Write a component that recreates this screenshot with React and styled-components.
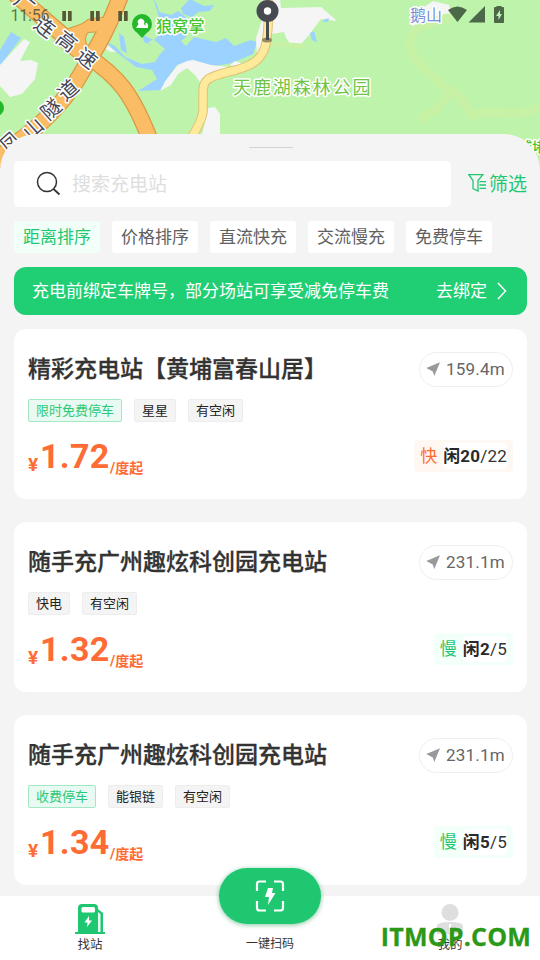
import React from 'react';
import styled, { createGlobalStyle, css } from 'styled-components';

const GlobalStyle = createGlobalStyle`
  * { box-sizing: border-box; }
  body {
    margin: 0;
    background: #f4f4f4;
    font-family: Roboto, "Noto Sans CJK SC", sans-serif;
    color: #333;
  }
`;

const Screen = styled.main`
  width: 540px;
  height: 960px;
  overflow: hidden;
  display: flex;
  flex-direction: column;
  background: #f4f4f4;
`;

const MapSvg = styled.svg`
  display: block;
  width: 540px;
  height: 174px;
  flex: none;
`;

const MapLabel = styled.text`
  font-family: "Noto Sans CJK SC", sans-serif;
  font-size: ${(p) => p.$size}px;
  letter-spacing: ${(p) => p.$spacing || 0}px;
  font-weight: ${(p) => p.$weight || 400};
  fill: ${(p) => p.$color};
  stroke: #fff;
  stroke-width: 3px;
  stroke-linejoin: round;
  paint-order: stroke;
`;

const ClockText = styled.text`
  font-family: Roboto, sans-serif;
  font-size: 16px;
  fill: #30402c;
  fill-opacity: 0.72;
`;

const Sheet = styled.section`
  position: relative;
  flex: 1;
  min-height: 0;
  margin-top: -40px;
  padding: 13px 13px 0 14px;
  border-radius: 36px 36px 0 0;
  background: #f4f4f4;
  display: flex;
  flex-direction: column;
  overflow: hidden;
`;

const Grip = styled.div`
  flex: none;
  align-self: center;
  width: 44px;
  height: 1px;
  background: #d2d4d4;
`;

const SearchRow = styled.div`
  flex: none;
  display: flex;
  align-items: center;
  justify-content: space-between;
  height: 46px;
  margin-top: 13px;
`;

const SearchBox = styled.div`
  display: flex;
  align-items: center;
  width: 437px;
  height: 46px;
  padding-left: 22px;
  gap: 10px;
  border-radius: 5px;
  background: #fff;
  color: #dedede;
  font-size: 19px;
  line-height: 47px;
`;

const FilterButton = styled.div`
  display: flex;
  align-items: center;
  gap: 3px;
  height: 44px;
  padding-bottom: 4px;
  color: #1fc771;
  font-size: 19px;
  white-space: nowrap;
`;

const Tabs = styled.div`
  flex: none;
  display: flex;
  gap: 12px;
  margin-top: 14px;
`;

const Tab = styled.div`
  width: 86px;
  height: 32px;
  border-radius: 3px;
  font-size: 17px;
  line-height: 33px;
  text-align: center;
  background: ${(p) => (p.$active ? '#f1fff8' : '#fff')};
  color: ${(p) => (p.$active ? '#1fc771' : '#606060')};
`;

const Banner = styled.div`
  flex: none;
  display: flex;
  align-items: center;
  justify-content: space-between;
  height: 48px;
  margin-top: 14px;
  padding: 0 20px 0 18px;
  border-radius: 12px;
  background: #20cf74;
  color: #fff;
  font-size: 17px;
  line-height: 48px;
`;

const BannerAction = styled.span`
  display: flex;
  align-items: center;
  gap: 10px;
`;

const StationList = styled.div`
  flex: none;
  display: flex;
  flex-direction: column;
  gap: 23px;
  margin-top: 14px;
`;

const Card = styled.article`
  height: 170px;
  padding: 23px 14px 0;
  border-radius: 12px;
  background: #fff;
  display: flex;
  flex-direction: column;
`;

const CardRow = styled.div`
  display: flex;
  justify-content: space-between;
  align-items: flex-start;
`;

const Title = styled.h2`
  margin: 0;
  padding-top: 1px;
  font-size: 23px;
  line-height: 34px;
  font-weight: 500;
  -webkit-text-stroke: 0.3px #333;
  white-space: nowrap;
`;

const Distance = styled.div`
  display: flex;
  align-items: center;
  justify-content: center;
  gap: 6px;
  width: 94px;
  height: 35px;
  padding: 0 1px 2px 0;
  border: 1px solid #efefef;
  border-radius: 18px;
  color: #666;
  font-size: 17px;
  letter-spacing: 0.2px;
`;

const Tags = styled.div`
  display: flex;
  gap: 12px;
  height: 23px;
  margin-top: 12px;
`;

const Tag = styled.span`
  height: 23px;
  padding: 0 7px;
  border: 1px solid #ededed;
  border-radius: 2px;
  background: #f4f4f4;
  color: #222;
  font-size: 13px;
  line-height: 22px;
  ${(p) =>
    p.$green &&
    css`
      border-color: #a3e8c5;
      background: #e8faf1;
      color: #2bc97a;
    `}
`;

const PriceRow = styled(CardRow)`
  margin-top: 17px;
`;

const Price = styled.div`
  display: flex;
  align-items: baseline;
  color: #ff6b35;
  font-weight: 700;
  line-height: 34px;
  height: 34px;
`;

const Currency = styled.span`
  position: relative;
  top: 3px;
  width: 12px;
  font-size: 19px;
`;

const Amount = styled.span`
  font-size: 34px;
  letter-spacing: 0.3px;
  width: 70px;
`;

const Unit = styled.span`
  position: relative;
  top: 5px;
  font-size: 14px;
  font-weight: 700;
`;

const Availability = styled.div`
  display: flex;
  align-items: center;
  height: 32px;
  margin-top: 1px;
  padding: 0 6px;
  gap: 6px;
  border-radius: 4px;
  background: ${(p) => (p.$fast ? '#fff7f1' : '#f3fff9')};
  color: ${(p) => (p.$fast ? '#ff6b2c' : '#1fc771')};
  font-size: 17px;
  line-height: 32px;
`;

const Slots = styled.span`
  height: 26px;
  line-height: 26px;
  border-radius: 4px;
  background: #fff;
  color: #333;
  letter-spacing: 0.2px;
`;

const Free = styled.b`
  font-weight: 700;
  color: #292929;
`;

const NavBar = styled.nav`
  position: relative;
  flex: none;
  display: grid;
  grid-template-columns: repeat(3, 180px);
  height: 64px;
  background: #fff;
`;

const NavItem = styled.div`
  display: flex;
  flex-direction: column;
  align-items: center;
  padding-top: 7px;
  color: #333;
  font-size: ${(p) => p.$size || 12.5}px;
  line-height: 18px;
`;

const NavText = styled.span`
  margin-top: ${(p) => p.$gap ?? 2}px;
`;

const ScanButton = styled.div`
  flex: none;
  display: flex;
  align-items: center;
  justify-content: center;
  width: 102px;
  height: 56px;
  margin: -35px 0 11px;
  border-radius: 28px;
  background: #1fc771;
  box-shadow: 0 1px 5px rgba(31, 150, 90, 0.55);
`;

const Watermark = styled.div`
  position: absolute;
  right: 9px;
  top: 23px;
  color: #2b9917;
  font-family: "Open Sans", sans-serif;
  font-size: 25px;
  letter-spacing: 0.2px;
  line-height: 34px;
  font-weight: 700;
  -webkit-text-stroke: 0.3px #2b9917;
`;

const stations = [
  { name: '精彩充电站【黄埔富春山居】', distance: '159.4m', tags: ['限时免费停车', '星星', '有空闲'], price: '1.72', kind: '快', free: 20, total: 22 },
  { name: '随手充广州趣炫科创园充电站', distance: '231.1m', tags: ['快电', '有空闲'], price: '1.32', kind: '慢', free: 2, total: 5 },
  { name: '随手充广州趣炫科创园充电站', distance: '231.1m', tags: ['收费停车', '能银链', '有空闲'], price: '1.34', kind: '慢', free: 5, total: 5 },
];

const highway = [
  'M8 -12 L86 55 C117 76 132 91 152 145',
  'M122 -8 Q111 22 98 45 L76 82 Q54 116 16 143 L-8 164',
];

const interchange = 'M60 31 Q83 26 88 20 Q99 17 111 18 L103 31 L88 32 Q82 37 88 49 L76 58 L55 42Z';

function MapView() {
  return (
    <MapSvg viewBox="0 0 540 174">
      <rect width="540" height="174" fill="#bdf3ab" />
      <path d="M0 50 L11 32 21 38 0 66Z" fill="#9bd2ff" />
      <path d="M0 65 L24 39 30 42 20 61 31 60 38 63 35 79 22 94 10 97 0 86Z" fill="#f5f5f5" />
      <path d="M153 -2 L157 5 159 12 171 15 178 11 187 18 185 27 187 36 181 41 186 46 194 37 216 42 226 38 234 46 251 40 257 42 253 54 232 63 210 67 193 60 177 65 164 83 161 90 138 91 157 79 152 70 136 67 115 51 106 42 115 46 125 57 142 64 155 62 160 54 165 49 153 39 148 43 153 46 144 42 142 35 154 40 160 34 159 17Z" fill="#9bd2ff" />
      <path d="M183 14 L181 8 190 -1 204 6 214 5 210 11 198 12 192 17Z" fill="#9bd2ff" />
      <path d="M121 50 L119 33 124 37 127 53Z" fill="#9bd2ff" />
      <path d="M105 43 L116 52 111 52 104 48Z" fill="#f5f5f5" />
      <path d="M160 91 L166 80 178 65 187 61 193 60 211 65 230 67 217 73 206 78 202 85 195 75 187 68 178 74 171 85Z" fill="#f5f5f5" />
      <path d="M230 65 L235 61 243 64 257 57 256 38 262 20 262 -2 280 -2 281 8 321 7 337 21 321 19 309 35 301 44 291 45 286 38 284 32 266 35 263 50 248 67 237 68Z" fill="#f5f5f5" />
      <path d="M323 20 L329 18 328 22 323 22Z M310 33 L314 31 317 42 312 40Z" fill="#9bd2ff" />
      <path d="M208 108 L215 107 220 114 220 135 202 135Z" fill="#f5f5f5" />
      <path d="M409 24 L424 7 433 1 449 5 451 13 418 28Z" fill="#f5f5f5" />
      <g fill="none" stroke="#c7f2a6" strokeLinecap="round" strokeLinejoin="round">
        <path d="M448 18 C425 23 408 27 410 48 C418 68 436 75 449 94 L437 108 422 119" strokeWidth="9" />
        <path d="M449 94 L454 89 473 116 C490 105 505 122 545 106" strokeWidth="9" />
        <path d="M273 44 L303 46" strokeWidth="5" />
      </g>
      <g fill="none" strokeLinecap="round" strokeLinejoin="round">
        <path d="M268 0 C270 50 265 62 236 70 C205 77 203 80 203 94 L203 112 Q201 123 191 138" stroke="#dfc174" strokeWidth="9.5" />
        <path d="M268 0 C270 50 265 62 236 70 C205 77 203 80 203 94 L203 112 Q201 123 191 138" stroke="#ffe99a" strokeWidth="7.5" />
        {highway.map((d) => (
          <path key={d} d={d} stroke="#d99843" strokeWidth="17" />
        ))}
        <path d={interchange} stroke="#d99843" strokeWidth="2" />
        {highway.map((d) => (
          <path key={d} d={d} stroke="#fbbc66" strokeWidth="14.5" />
        ))}
        <path d={interchange} fill="#fbbc66" />
      </g>
      <circle cx="142" cy="24" r="10" fill="#24b82b" />
      <path d="M134.500 30 L142 38 149.500 30Z" fill="#24b82b" />
      <path d="M136 28 L138.500 24 L137.500 22 Q138 19 141 18.500 Q144 19 144.500 22 L144 24 L145.500 26 Q145 22 147 23 Q149 25 148 28Z" fill="#fff" />
      <circle cx="-4" cy="108" r="8" fill="#24b82b" />
      <MapLabel x="156" y="31.500" $size={16} $spacing={0.3} $weight={500} $color="#47c52d">狼窝掌</MapLabel>
      <MapLabel x="233" y="93.500" $size={18} $spacing={1.9} $color="#70c443">天鹿湖森林公园</MapLabel>
      <MapLabel x="410" y="21" $size={16} $color="#7691d5">鹅山</MapLabel>
      <MapLabel x="518" y="152" $size={14} $weight={500} $color="#47c52d">埔堵</MapLabel>
      {[
        ['广', 25, 3, 38], ['连', 45, 27, 38], ['高', 67, 41, 38], ['速', 87, 58, 38],
        ['道', 68, 90, -42], ['隧', 51, 109, -42], ['山', 33, 128, -42], ['凤', 10, 142, -42],
      ].map(([char, x, y, angle]) => (
        <g key={char} transform={`translate(${x} ${y}) rotate(${angle})`}>
          <MapLabel x="-10" y="7.500" $size={20} $weight={400} $color="#414557">{char}</MapLabel>
        </g>
      ))}
      <ellipse cx="267" cy="40" rx="5" ry="2.5" fill="#958b63" />
      <path d="M267.500 20V40" stroke="#474a51" strokeWidth="3" />
      <circle cx="267.500" cy="11" r="11" fill="#474a51" />
      <circle cx="267.500" cy="11" r="3.700" fill="#fff" />
      <ClockText x="10.500" y="21" textLength="39">11:56</ClockText>
      <path d="M62.300 11h3.700v10h-3.700z M68 11h3.700v10h-3.700z M90.300 11h3.700v10h-3.700z M96 11h3.700v10h-3.700z M118.300 11h3.700v10h-3.700z M124 11h3.700v10h-3.700z" fill="#5a5638" />
      <g fill="#4b6848">
        <path d="M448 10 Q457.500 3 467 10 L457.500 22Z M485 6 V22.500 H468.500Z" />
        <path d="M494 8 Q494 7 495 7H496.500V6H501.500V7H503 Q504 7 504 8V22 Q504 23 503 23H495 Q494 23 494 22Z" />
      </g>
      <path d="M500 10 L496 16 h2.500 V20 L502 14h-2Z" fill="#c1efb2" />
    </MapSvg>
  );
}

const SearchIcon = () => (
  <svg width="26" height="26" viewBox="0 0 26 26" fill="none" stroke="#333" strokeWidth="1.500">
    <circle cx="11" cy="11" r="9.500" />
    <path d="M17.500 18L23.500 23.500" strokeWidth="1.800" />
  </svg>
);

const FilterIcon = () => (
  <svg width="18" height="20" viewBox="0 0 18 20" fill="none" stroke="#1fc771" strokeWidth="1.300">
    <path d="M.8 2.700H14.800L10 8.500V19L5 16.500V8.500L.8 2.700ZM11.500 9.600h6.500M11.500 13h6.500M11.500 16.400h6.500" />
  </svg>
);

const ArrowIcon = () => (
  <svg width="14" height="14" viewBox="0 0 14 14" fill="#999">
    <path d="M.3 6L14 .3L8.300 14L6.800 9.500Z" />
  </svg>
);

const PumpIcon = () => (
  <svg width="30" height="31" viewBox="0 0 30 31">
    <path d="M3 29V5Q3 1 7 1H19Q23 1 23 5V6L28 10V29H30V31H0V29Z" fill="#1fc771" />
    <rect x="6.500" y="4" width="13.500" height="5.500" rx="1.500" fill="#fff" />
    <path d="M23 9L25.500 11V29H23Z" fill="#e8faf1" />
    <path d="M14 13L9.500 19.500H12.500L12 24L17 17.500H14Z" fill="#fff" />
  </svg>
);

const ScanIcon = () => (
  <svg width="30" height="32" viewBox="0 0 30 32" fill="none">
    <path d="M2 11V4Q2 1.500 4.500 1.500H11M19 1.500H25.500Q28 1.500 28 4V11M28 21V28Q28 30.500 25.500 30.500H19M11 30.500H4.500Q2 30.500 2 28V21" stroke="#fff" strokeWidth="2.200" />
    <path d="M13 8H18L17 13H20.500L13 25L14 17H10Z" fill="#fff" />
  </svg>
);

const UserIcon = () => (
  <svg width="28" height="31" viewBox="0 0 28 31" fill="#dedede">
    <circle cx="14" cy="9.500" r="8.500" />
    <path d="M1 31V23Q1 19 14 19Q27 19 27 23V31Z" />
    <path d="M14 21V30" stroke="#fff" strokeWidth="2" />
  </svg>
);

const StationCard = ({ station }) => (
  <Card>
    <CardRow>
      <Title>{station.name}</Title>
      <Distance><ArrowIcon />{station.distance}</Distance>
    </CardRow>
    <Tags>
      {station.tags.map((tag) => (
        <Tag key={tag} $green={tag.endsWith('停车')}>{tag}</Tag>
      ))}
    </Tags>
    <PriceRow>
      <Price>
        <Currency>¥</Currency>
        <Amount>{station.price}</Amount>
        <Unit>/度起</Unit>
      </Price>
      <Availability $fast={station.kind === '快'}>
        {station.kind}
        <Slots><Free>闲{station.free}</Free>/{station.total}</Slots>
      </Availability>
    </PriceRow>
  </Card>
);

export default function App() {
  return (
    <Screen>
      <GlobalStyle />
      <MapView />
      <Sheet>
        <Grip />
        <SearchRow>
          <SearchBox><SearchIcon />搜索充电站</SearchBox>
          <FilterButton><FilterIcon />筛选</FilterButton>
        </SearchRow>
        <Tabs>
          {['距离排序', '价格排序', '直流快充', '交流慢充', '免费停车'].map((label, i) => (
            <Tab key={label} $active={i === 0}>{label}</Tab>
          ))}
        </Tabs>
        <Banner>
          <span>充电前绑定车牌号，部分场站可享受减免停车费</span>
          <BannerAction>
            去绑定
            <svg width="10" height="18" viewBox="0 0 10 18" fill="none" stroke="#fff" strokeWidth="1.500">
              <path d="M1 1L8.500 9L1 17" />
            </svg>
          </BannerAction>
        </Banner>
        <StationList>
          {stations.map((station) => (
            <StationCard key={station.price} station={station} />
          ))}
        </StationList>
      </Sheet>
      <NavBar>
        <NavItem><PumpIcon /><NavText>找站</NavText></NavItem>
        <NavItem $size={12}><ScanButton><ScanIcon /></ScanButton><NavText $gap={0}>一键扫码</NavText></NavItem>
        <NavItem><UserIcon /><NavText>我的</NavText></NavItem>
        <Watermark>ITMOP.COM</Watermark>
      </NavBar>
    </Screen>
  );
}
